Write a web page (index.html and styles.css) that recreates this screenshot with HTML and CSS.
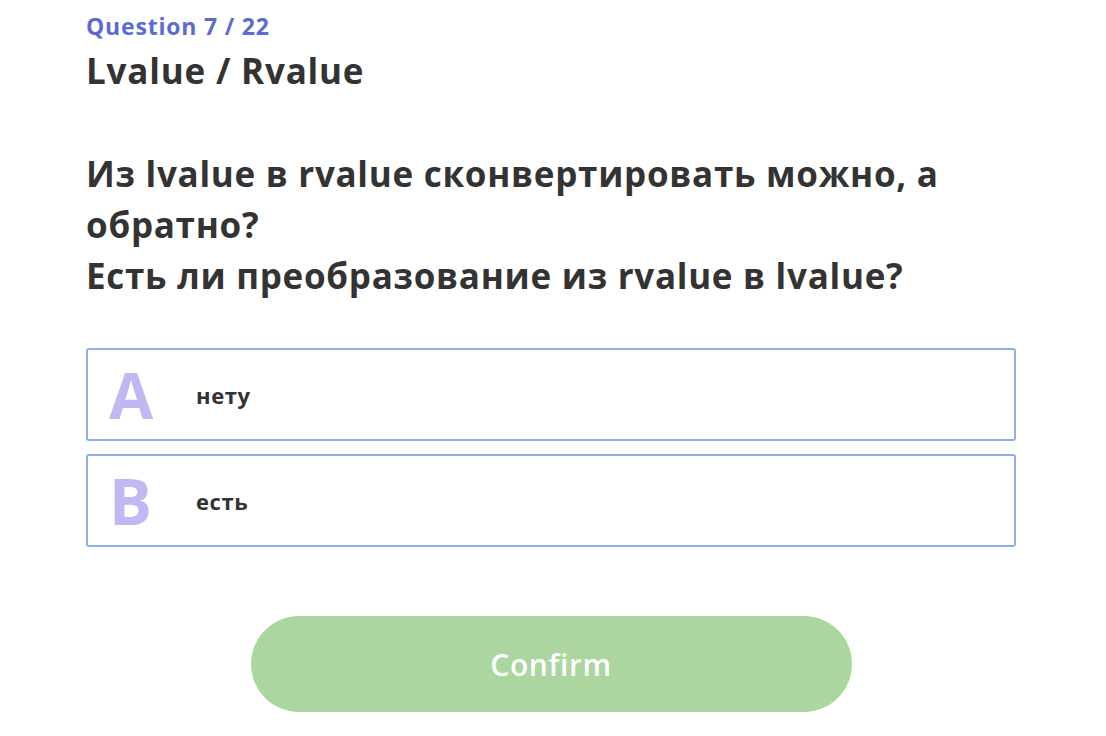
FILE: index.html
```html
<!DOCTYPE html>
<html lang="ru">
<head>
<meta charset="utf-8">
<title>Question 7 / 22</title>
<link rel="stylesheet" href="styles.css">
</head>
<body>
<main class="quiz">
  <div class="counter">Question 7 / 22</div>
  <h1 class="title">Lvalue / Rvalue</h1>
  <p class="question">
    <span class="line">Из lvalue в rvalue сконвертировать можно, а</span>
    <span class="line">обратно?</span>
    <span class="line">Есть ли преобразование из rvalue в lvalue?</span>
  </p>
  <ul class="answers">
    <li class="answer"><span class="letter">A</span><span class="answer-text">нету</span></li>
    <li class="answer"><span class="letter">B</span><span class="answer-text">есть</span></li>
  </ul>
  <div class="actions">
    <button class="confirm" type="button">Confirm</button>
  </div>
</main>
</body>
</html>
```
FILE: styles.css
```css
html, body {
  margin: 0;
  padding: 0;
  background: #ffffff;
}

body {
  font-family: "Open Sans", "DejaVu Sans", sans-serif;
  color: #333333;
}

.quiz {
  width: 930px;
  padding: 11px 0 0 86px;
  display: flex;
  flex-direction: column;
}

.counter {
  font-size: 23px;
  font-weight: 700;
  line-height: 30px;
  color: #5d6bd1;
  letter-spacing: 0.8px;
}

.title {
  margin: 8px 0 0;
  font-size: 35px;
  font-weight: 700;
  line-height: 44px;
  color: #333333;
  letter-spacing: 0.8px;
}

.question {
  margin: 55px 0 0;
  font-size: 35px;
  font-weight: 700;
  line-height: 51px;
  color: #333333;
  letter-spacing: 0.72px;
}

.line {
  display: block;
  white-space: nowrap;
}

.answers {
  list-style: none;
  margin: 47px 0 0;
  padding: 0;
  display: flex;
  flex-direction: column;
  gap: 13px;
}

.answer {
  box-sizing: border-box;
  height: 93px;
  border: 2px solid #8bb1e7;
  border-radius: 3px;
  display: flex;
  align-items: center;
  padding-left: 21px;
}

.letter {
  width: 87px;
  font-size: 64px;
  font-weight: 700;
  color: #c1b8f3;
  line-height: 1;
  letter-spacing: 0;
}

.answer-text {
  font-size: 22px;
  font-weight: 700;
  color: #333333;
  letter-spacing: 0.6px;
}

.actions {
  display: flex;
  justify-content: center;
  margin-top: 69px;
}

.confirm {
  width: 601px;
  height: 96px;
  border: none;
  border-radius: 48px;
  background: #abd6a0;
  color: #ffffff;
  font-family: "Open Sans", "DejaVu Sans", sans-serif;
  font-size: 30px;
  font-weight: 600;
  letter-spacing: 0.6px;
  cursor: pointer;
}
```
